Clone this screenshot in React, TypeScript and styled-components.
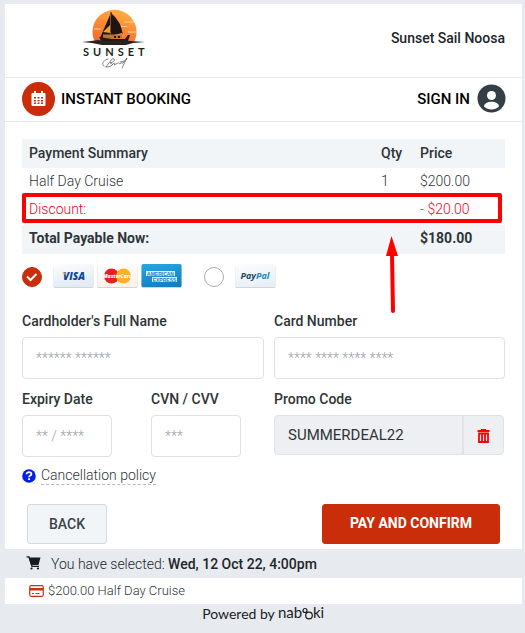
import React from "react";
import styled, { createGlobalStyle, css } from "styled-components";

const GlobalStyle = createGlobalStyle`
  *, *::before, *::after { box-sizing: border-box; }
  body {
    margin: 0;
    background: #e7eaee;
    color: #2f3437;
    font-family: Roboto, "Liberation Sans", sans-serif;
    font-size: 14px;
    line-height: 20px;
  }
  button, input { font: inherit; color: inherit; margin: 0; }
`;

const Page = styled.div`
  padding: 4px 3px 0 5px;
`;

const Card = styled.main`
  background: #fff;
`;

const Header = styled.header`
  display: flex;
  align-items: center;
  justify-content: space-between;
  height: 74px;
  padding: 0 17px 5px 70px;
  border-bottom: 1px solid #e6e8ea;
`;

const Company = styled.span`
  color: #212529;
  font-weight: 500;
`;

const BookingBar = styled.div`
  display: flex;
  align-items: center;
  justify-content: space-between;
  height: 44px;
  padding: 0 16px 2px 17px;
  border-bottom: 1px solid #e6e8ea;
  color: #000;
  font-size: 15px;
  font-weight: 500;
`;

const BookingTitle = styled.h1`
  display: flex;
  align-items: center;
  gap: 6px;
  margin: 0;
  font-size: inherit;
  font-weight: inherit;
`;

const RoundBadge = styled.span`
  display: grid;
  place-items: center;
  width: 33px;
  height: 34px;
  border-radius: 50%;
  background: #ca2d0a;
`;

const SignIn = styled.button`
  display: flex;
  align-items: center;
  gap: 7px;
  padding: 0;
  border: 0;
  background: none;
  cursor: pointer;
`;

const Content = styled.form`
  padding: 17px 17px 5px;
`;

const SummaryWrap = styled.div`
  position: relative;
`;

const Summary = styled.table`
  width: 100%;
  border-collapse: collapse;
  table-layout: fixed;
`;

const Cell = styled.td`
  padding: 0 0 0 7px;
  text-align: left;
  font-weight: inherit;
`;

const SummaryRow = styled.tr<{ $kind: "head" | "item" | "discount" | "total" }>`
  height: ${(p) => (p.$kind === "item" ? 28 : 29)}px;
  font-weight: ${(p) => ({ head: 500, item: 300, discount: 300, total: 700 })[p.$kind]};
  ${Cell} {
    padding-bottom: ${(p) => ({ head: 1, item: 2, discount: 3, total: 3 })[p.$kind]}px;
  }
  ${(p) =>
    (p.$kind === "head" || p.$kind === "total") &&
    css`
      background: #f1f5f8;
    `}
  ${(p) =>
    p.$kind === "discount" &&
    css`
      color: #f5001d;
    `}
`;

const Highlight = styled.div`
  position: absolute;
  top: 54px;
  left: 0;
  right: 3px;
  height: 30px;
  border: 4px solid #fe0000;
  border-radius: 2px;
  pointer-events: none;
`;

const Pointer = styled.svg`
  position: absolute;
  top: 97px;
  right: 106px;
  pointer-events: none;
`;

const PayMethods = styled.div`
  display: flex;
  align-items: center;
  gap: 22px;
  margin-top: 9px;
  height: 26px;
`;

const Method = styled.label`
  display: flex;
  align-items: center;
  gap: 11px;
`;

const RadioBox = styled.span`
  position: relative;
  display: grid;
  padding-top: 2px;
  svg {
    position: absolute;
    inset: 2px 0 0;
    pointer-events: none;
  }
`;

const Radio = styled.input`
  appearance: none;
  width: 20px;
  height: 20px;
  border: 1px solid #a9adb0;
  border-radius: 50%;
  background: #fff;
  &:checked {
    border-color: #ca2d0a;
    background: #ca2d0a;
  }
  & + svg {
    display: none;
  }
  &:checked + svg {
    display: block;
  }
`;

const Brands = styled.span`
  display: flex;
  gap: 3px;
`;

const Fields = styled.div`
  display: grid;
  grid-template-columns: 22fr 21fr;
  column-gap: 10px;
  row-gap: 10px;
  margin-top: 22px;
`;

const ShortFields = styled.div`
  display: grid;
  grid-template-columns: 90px 90px;
  column-gap: 39px;
`;

const FieldLabel = styled.label`
  display: flex;
  flex-direction: column;
  gap: 6px;
  min-width: 0;
  font-weight: 500;
`;

const TextInput = styled.input`
  width: 100%;
  height: 42px;
  padding: 0 13px;
  border: 1px solid #dfe1e3;
  border-radius: 4px;
  background: #fff;
  font-weight: 300;
  font-size: 14px;
  &::placeholder {
    color: #9aa2a8;
    opacity: 1;
  }
`;

const PromoBox = styled.div`
  display: flex;
  height: 40px;
  margin-right: 1px;
  border: 1px solid #e0e2e5;
  border-radius: 4px;
  background: #eeeff3;
  overflow: hidden;
`;

const PromoInput = styled.input`
  flex: 1;
  min-width: 0;
  padding: 0 13px;
  border: 0;
  background: none;
  font-size: 15px;
  font-weight: 400;
`;

const RemoveButton = styled.button`
  display: grid;
  place-items: center;
  width: 41px;
  padding: 2px 0 0;
  border: 0;
  border-left: 2px solid #e0e2e5;
  background: none;
`;

const Policy = styled.div`
  display: flex;
  align-items: center;
  gap: 5px;
  margin-top: 10px;
`;

const PolicyLink = styled.a`
  color: #2f3437;
  font-weight: 300;
  line-height: 17px;
  text-decoration: none;
  border-bottom: 1px dashed #b4b8bb;
`;

const Actions = styled.div`
  display: flex;
  justify-content: space-between;
  margin-top: 19px;
  padding: 0 5px;
`;

const ActionButton = styled.button<{ $primary?: boolean }>`
  height: 40px;
  padding: 0 21px;
  border: 1px solid #d6d9db;
  border-radius: 3px;
  background: #f1f5f8;
  color: #3d4347;
  font-weight: 500;
  ${(p) =>
    p.$primary &&
    css`
      padding: 0 27px 2px;
      border-color: #ca2d0a;
      background: #ca2d0a;
      color: #fff;
      font-weight: 700;
    `}
`;

const SelectedBar = styled.div`
  display: flex;
  align-items: center;
  gap: 9px;
  height: 29px;
  padding: 0 21px;
  background: #e7eaee;
  color: #212529;
  font-weight: 300;
  b { font-weight: 500; }
`;

const SelectedItem = styled.div`
  display: flex;
  align-items: center;
  gap: 4px;
  height: 26px;
  padding: 0 24px;
  font-size: 13px;
  font-weight: 300;
`;

const Footer = styled.footer`
  display: flex;
  align-items: center;
  justify-content: center;
  gap: 3px;
  height: 20px;
  color: #1a1c1e;
  font-family: Lato, sans-serif;
  font-size: 14px;
`;

const SunsetLogo = () => (
  <svg width="80" height="66" viewBox="0 0 80 66" role="img" aria-label="Sunset Boat">
    <defs>
      <linearGradient id="sun" x1="0.7" y1="0" x2="0.3" y2="1">
        <stop offset="0" stopColor="#ffb047" />
        <stop offset="0.5" stopColor="#fd8a35" />
        <stop offset="1" stopColor="#f46b2a" />
      </linearGradient>
    </defs>
    <path d="M20 37A22 22 0 1 1 59 37Z" fill="url(#sun)" />
    <path d="M49 17h10M46 21.500h6M19 24h7M53 27h9" stroke="#ffd3a0" strokeWidth="1" />
    <path d="M35 10L25 33h10z" fill="#1c1512" />
    <path d="M36 7v26" stroke="#1c1512" strokeWidth="1" />
    <path d="M36 8q10 8 12 22l-12 1z" fill="#1c1512" />
    <path d="M28 27l7-7v8zM39 30l8-2 2 3-9 2z" fill="#e8a13a" />
    <path d="M28 29.500h19v4H28z" fill="#b8782c" />
    <path d="M24 32l13 2h13l3-4h2l-3 9H28z" fill="#211916" />
    <path d="M39 31h2v2h-2zM43 31h2v2h-2z" fill="#211916" />
    <path d="M7 37l9-1 7-1 8 1 15-1 10 1 14 1-12 1-7 2H27l-10-2z" fill="#2b2220" />
    <text x="8" y="51" fill="#231f20" fontFamily="Lato, sans-serif" fontSize="11" fontWeight="700" letterSpacing="4">SUNSET</text>
    <path d="M33 54c-5 1-7 6-4 7M31 62l6-8c4-1 3 3-2 4 4 0 3 4-4 4M37 60c2-3 4-2 2 0l2-1 2-1c1-1 1 2 3 0l2 0 4-5-5 10M45 57l4-1" fill="none" stroke="#55504e" strokeWidth="0.7" strokeLinecap="round" />
  </svg>
);

const CalendarIcon = () => (
  <svg width="15" height="17" viewBox="0 0 15 17" aria-hidden="true">
    <path d="M3 1h2v2h5V1h2v2h1.500q1 0 1 1v11q0 1-1 1h-12q-1 0-1-1V4q0-1 1-1H3z" fill="#fff" />
    <path d="M3 7h2v1.500H3zM6.500 7h2v1.500h-2zM10 7h2v1.500h-2zM3 10h2v1.500H3zM6.500 10h2v1.500h-2zM10 10h2v1.500h-2zM3 12.500h2V14H3zM6.500 12.500h2V14h-2zM10 12.500h2V14h-2z" fill="#ca2d0a" />
  </svg>
);

const UserIcon = () => (
  <svg width="29" height="29" viewBox="0 0 29 29" aria-hidden="true">
    <circle cx="14.500" cy="14.500" r="14" fill="#343e47" />
    <circle cx="14.500" cy="11.500" r="4.500" fill="#fff" />
    <path d="M7 22.500c0-6.500 15-6.500 15 0-4 4-11 4-15 0z" fill="#fff" />
  </svg>
);

const CheckMark = () => (
  <svg width="20" height="20" viewBox="0 0 20 20" aria-hidden="true">
    <path d="M5 9.500l3.500 3.500 6-6" fill="none" stroke="#fff" strokeWidth="2" />
  </svg>
);

const brandFont = { fontFamily: "Open Sans, sans-serif", fontStyle: "italic", fontWeight: 800 } as const;

const BrandCard = ({ id, from, to, label, children }: {
  id: string; from: string; to: string; label: string; children: React.ReactNode;
}) => (
  <svg width="41" height="24" viewBox="0 0 41 24" role="img" aria-label={label}>
    <defs>
      <linearGradient id={id} x1="0" y1="0" x2="0.3" y2="1">
        <stop offset="0" stopColor={from} />
        <stop offset="1" stopColor={to} />
      </linearGradient>
    </defs>
    <rect x="0.500" y="1" width="40" height="23" rx="1.500" fill="#cfd5da" />
    <rect x="0.500" y="0" width="40" height="23" rx="1.500" fill={`url(#${id})`} />
    {children}
  </svg>
);

const Visa = () => (
  <BrandCard id="visa" from="#fcfdfe" to="#e3ebf5" label="Visa">
    <text x="21" y="16" textAnchor="middle" fontSize="10" fill="#0b4a95" {...brandFont}>VISA</text>
    <path d="M9 8.500h3l1 3z" fill="#f2a629" />
  </BrandCard>
);

const Mastercard = () => (
  <BrandCard id="mc" from="#ffffff" to="#fbf3e8" label="MasterCard">
    <circle cx="14.500" cy="12" r="7.500" fill="#ea1c24" />
    <circle cx="26.500" cy="12" r="7.500" fill="#fdb022" />
    <text x="20.500" y="14" textAnchor="middle" fontSize="5" fill="#fff" {...brandFont}>MasterCard</text>
  </BrandCard>
);

const Amex = () => (
  <BrandCard id="amex" from="#25a9e6" to="#1580c0" label="American Express">
    <path d="M5 7h29v5H5zM11 13h25v5H11z" fill="#e4f2fa" />
    <text x="19.500" y="11.500" textAnchor="middle" fontSize="5" fontWeight="700" fill="#1a83c0" fontFamily="Liberation Sans, sans-serif">AMERICAN</text>
    <text x="23.500" y="17.500" textAnchor="middle" fontSize="5" fontWeight="700" fill="#1a83c0" fontFamily="Liberation Sans, sans-serif">EXPRESS</text>
  </BrandCard>
);

const PayPal = () => (
  <BrandCard id="paypal" from="#fcfdfe" to="#e8f0f6" label="PayPal">
    <text x="20" y="15" textAnchor="middle" fontSize="9" {...brandFont} fontWeight={700}>
      <tspan fill="#1d4866">Pay</tspan>
      <tspan fill="#1c86b8">Pal</tspan>
    </text>
  </BrandCard>
);

const TrashIcon = () => (
  <svg width="13" height="15" viewBox="0 0 13 15" aria-hidden="true">
    <path d="M4 0h5v1h3.500v2H0.500V1H4z" fill="#fe0000" />
    <path d="M2 4.500h9v8.500H2zM5 5v7M8 5v7" stroke="#fe0000" strokeWidth="1.800" fill="none" />
  </svg>
);

const HelpIcon = () => (
  <svg width="14" height="14" viewBox="0 0 14 14" aria-hidden="true">
    <circle cx="7" cy="7" r="6.800" fill="#0021e6" />
    <path d="M4.600 5.300c0-3 5.100-2.800 4.800 0-.2 1.400-2.300 1.200-2.300 2.900" fill="none" stroke="#fff" strokeWidth="1.800" />
    <path d="M6.100 9.300h1.900v1.800H6.100z" fill="#fff" />
  </svg>
);

const CartIcon = () => (
  <svg width="16" height="15" viewBox="0 0 16 15" aria-hidden="true">
    <path d="M0.500 0.800h2.500l3 9.500h7" fill="none" stroke="#191b1d" strokeWidth="1.300" />
    <path d="M2.500 1.500h12l-2 7.500H5z" fill="#191b1d" />
    <circle cx="5.500" cy="12.500" r="1.100" fill="#191b1d" />
    <circle cx="12" cy="12.500" r="1.100" fill="#191b1d" />
  </svg>
);

const CardIcon = () => (
  <svg width="15" height="12" viewBox="0 0 15 12" aria-hidden="true">
    <rect x="0.700" y="0.700" width="13.600" height="10.600" rx="1.500" fill="#fff" stroke="#c8320f" strokeWidth="1.200" />
    <path d="M1 3h13v2.500H1z" fill="#c8320f" />
    <path d="M3 8.500h2M6.500 8.500h4" stroke="#c8320f" strokeWidth="1" />
  </svg>
);

const NabookiLogo = () => (
  <svg width="47" height="20" viewBox="0 0 47 20" role="img" aria-label="nabooki" fill="#1a1c1e" fontFamily="Lato, sans-serif" fontSize="15">
    <text x="0" y="14">nab</text>
    <circle cx="27" cy="6.500" r="2" fill="none" stroke="#1a1c1e" strokeWidth="1.200" />
    <circle cx="31" cy="11.500" r="3.300" fill="none" stroke="#1a1c1e" strokeWidth="1.200" />
    <text x="35" y="14">ki</text>
  </svg>
);

export default function App() {
  return (
    <>
      <GlobalStyle />
      <Page>
        <Card>
          <Header>
            <SunsetLogo />
            <Company>Sunset Sail Noosa</Company>
          </Header>
          <BookingBar>
            <BookingTitle>
              <RoundBadge><CalendarIcon /></RoundBadge>
              INSTANT BOOKING
            </BookingTitle>
            <SignIn type="button">SIGN IN <UserIcon /></SignIn>
          </BookingBar>
          <Content onSubmit={(e) => e.preventDefault()}>
            <SummaryWrap>
              <Summary>
                <colgroup>
                  <col />
                  <col width="39" />
                  <col width="92" />
                </colgroup>
                <thead>
                  <SummaryRow $kind="head">
                    <Cell as="th" scope="col">Payment Summary</Cell>
                    <Cell as="th" scope="col">Qty</Cell>
                    <Cell as="th" scope="col">Price</Cell>
                  </SummaryRow>
                </thead>
                <tbody>
                  <SummaryRow $kind="item">
                    <Cell>Half Day Cruise</Cell>
                    <Cell>1</Cell>
                    <Cell>$200.00</Cell>
                  </SummaryRow>
                  <SummaryRow $kind="discount">
                    <Cell>Discount:</Cell>
                    <Cell />
                    <Cell>- $20.00</Cell>
                  </SummaryRow>
                  <SummaryRow $kind="total">
                    <Cell>Total Payable Now:</Cell>
                    <Cell />
                    <Cell>$180.00</Cell>
                  </SummaryRow>
                </tbody>
              </Summary>
              <Highlight />
              <Pointer width="14" height="78" viewBox="0 0 14 78" aria-hidden="true">
                <path d="M7 18l1 57" stroke="#fe0000" strokeWidth="4" strokeLinecap="round" />
                <path d="M6.500 0L13 20H1z" fill="#fe0000" />
              </Pointer>
            </SummaryWrap>
            <PayMethods>
              <Method>
                <RadioBox>
                  <Radio type="radio" name="method" value="card" defaultChecked />
                  <CheckMark />
                </RadioBox>
                <Brands><Visa /><Mastercard /><Amex /></Brands>
              </Method>
              <Method>
                <RadioBox>
                  <Radio type="radio" name="method" value="paypal" />
                  <CheckMark />
                </RadioBox>
                <PayPal />
              </Method>
            </PayMethods>
            <Fields>
              <FieldLabel>
                Cardholder's Full Name
                <TextInput placeholder="****** ******" />
              </FieldLabel>
              <FieldLabel>
                Card Number
                <TextInput placeholder="**** **** **** ****" />
              </FieldLabel>
              <ShortFields>
                <FieldLabel>
                  Expiry Date
                  <TextInput placeholder="** / ****" />
                </FieldLabel>
                <FieldLabel>
                  CVN / CVV
                  <TextInput placeholder="***" />
                </FieldLabel>
              </ShortFields>
              <FieldLabel as="div">
                <label htmlFor="promo">Promo Code</label>
                <PromoBox>
                  <PromoInput id="promo" defaultValue="SUMMERDEAL22" />
                  <RemoveButton type="button" aria-label="Remove promo code"><TrashIcon /></RemoveButton>
                </PromoBox>
              </FieldLabel>
            </Fields>
            <Policy>
              <HelpIcon />
              <PolicyLink href="#policy">Cancellation policy</PolicyLink>
            </Policy>
            <Actions>
              <ActionButton type="button">BACK</ActionButton>
              <ActionButton type="submit" $primary>PAY AND CONFIRM</ActionButton>
            </Actions>
          </Content>
          <SelectedBar>
            <CartIcon />
            <span>You have selected: <b>Wed, 12 Oct 22, 4:00pm</b></span>
          </SelectedBar>
          <SelectedItem>
            <CardIcon />
            $200.00 Half Day Cruise
          </SelectedItem>
        </Card>
        <Footer>Powered by <NabookiLogo /></Footer>
      </Page>
    </>
  );
}
